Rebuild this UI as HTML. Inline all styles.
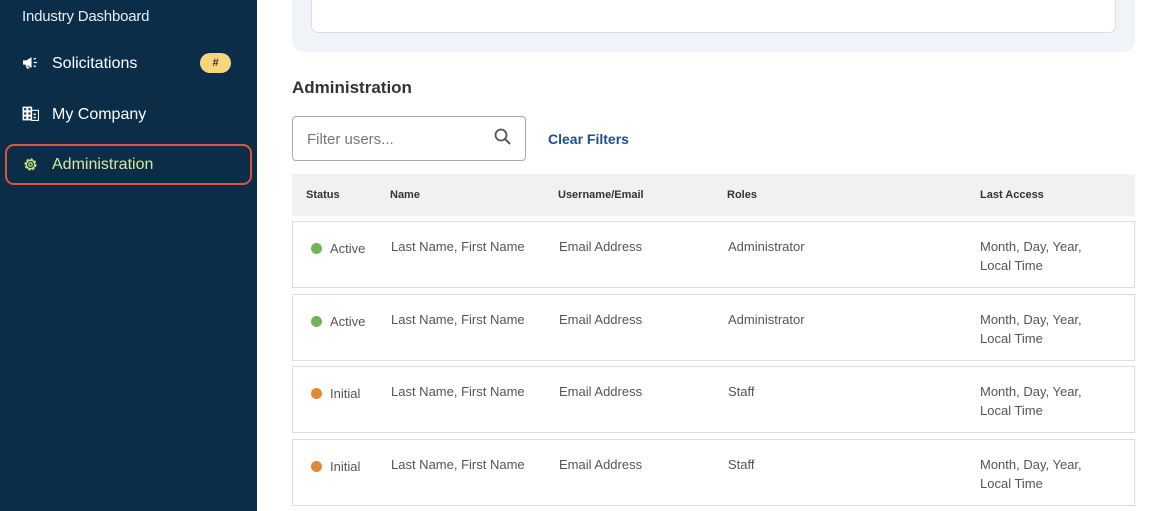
<!DOCTYPE html>
<html><head><style>
*{box-sizing:border-box;margin:0;padding:0}
body{width:1153px;height:511px;overflow:hidden;background:#fff;font-family:"Liberation Sans",sans-serif;position:relative;color:#3a3a3a}
.side{position:absolute;left:0;top:0;width:257px;height:511px;background:#0b2d48;color:#fff}
.side .t{position:absolute;left:22px;top:8px;font-size:15px;color:#e8edf2;letter-spacing:-0.2px}
.nav{position:absolute;left:52px;font-size:16px;color:#fff}
.ic{position:absolute}
.badge{position:absolute;left:200px;top:53px;width:31px;height:20px;border-radius:10px;background:#f7d57a;color:#333;font-size:11px;font-weight:bold;text-align:center;line-height:20px}
.sel{position:absolute;left:5px;top:144px;width:247px;height:41px;border:2.5px solid #e0533f;border-radius:9px}
.card{position:absolute;left:292px;top:-10px;width:843px;height:62px;background:#f0f4f9;border-radius:12px}
.card div{position:absolute;left:19px;top:0;width:805px;height:43px;background:#fff;border:1px solid #d9dee4;border-radius:7px}
h2{position:absolute;left:292px;top:78px;font-size:17px;font-weight:bold;color:#333}
.filter{position:absolute;left:292px;top:116px;width:234px;height:45px;border:1px solid #a9a9a9;border-radius:4px}
.filter span{position:absolute;left:14px;top:14px;font-size:15px;color:#777}
.clear{position:absolute;left:548px;top:131px;font-size:14px;font-weight:bold;color:#1f4e8c}
.th{position:absolute;left:292px;top:174px;width:843px;height:42px;background:#f0f1f1;font-size:11px;font-weight:bold;color:#333}
.th span,.row span{position:absolute}
.row{position:absolute;left:292px;width:843px;height:67px;border:1px solid #ddd;font-size:13px;color:#555}
.dot{width:11px;height:11px;border-radius:50%;left:18px;top:21px}
</style></head><body>
<div class="side">
<div class="t">Industry Dashboard</div>
<svg class="ic" style="left:22px;top:55px" width="17" height="15" viewBox="0 0 16 14"><path d="M1 5h3l5-3v10L4 9H1z" fill="#fff"/><path d="M4 9l1 3h2" stroke="#fff" fill="none" stroke-width="1.4"/><path d="M11 4l2-1M11 7h3M11 10l2 1" stroke="#fff" stroke-width="1.2"/></svg>
<div class="nav" style="top:55px">Solicitations</div>
<div class="badge">#</div>
<svg class="ic" style="left:22px;top:106px" width="17" height="15" viewBox="0 0 16 14"><rect x="0.5" y="0.5" width="9" height="13" fill="#fff"/><rect x="9" y="4" width="6.5" height="9.5" fill="none" stroke="#fff"/><g fill="#0b2d48"><rect x="2" y="2" width="2" height="2"/><rect x="6" y="2" width="2" height="2"/><rect x="2" y="6" width="2" height="2"/><rect x="6" y="6" width="2" height="2"/><rect x="2" y="10" width="2" height="2"/><rect x="6" y="10" width="2" height="2"/></g><rect x="11" y="7" width="2" height="1.5" fill="#fff"/><rect x="11" y="10" width="2" height="1.5" fill="#fff"/></svg>
<div class="nav" style="top:106px">My Company</div>
<div class="sel"></div>
<svg class="ic" style="left:22px;top:156px" width="17" height="17" viewBox="0 0 16 16"><circle cx="8" cy="8" r="4.5" fill="none" stroke="#c5e08a" stroke-width="2.5" stroke-dasharray="2 1.5"/><circle cx="8" cy="8" r="4" fill="none" stroke="#c5e08a" stroke-width="1.4"/><circle cx="8" cy="8" r="1.6" fill="none" stroke="#c5e08a" stroke-width="1.2"/></svg>
<div class="nav" style="top:156px;color:#d4e8a0">Administration</div>
</div>
<div class="card"><div></div></div>
<h2>Administration</h2>
<div class="filter"><span>Filter users...</span>
<svg style="position:absolute;left:201px;top:11px" width="18" height="18" viewBox="0 0 18 18"><circle cx="7" cy="7" r="5.5" fill="none" stroke="#555" stroke-width="1.8"/><path d="M11 11l5 5" stroke="#555" stroke-width="2"/></svg></div>
<div class="clear">Clear Filters</div>
<div class="th"><span style="left:14px;top:15px">Status</span><span style="left:98px;top:15px">Name</span><span style="left:266px;top:15px">Username/Email</span><span style="left:435px;top:15px">Roles</span><span style="left:688px;top:15px">Last Access</span></div>

<div class="row" style="top:221px"><span class="dot" style="background:#6fb35a"></span><span style="left:37px;top:19px">Active</span><span style="left:98px;top:17px">Last Name, First Name</span><span style="left:266px;top:17px">Email Address</span><span style="left:435px;top:17px">Administrator</span><span style="left:687px;top:15px;line-height:19px">Month, Day, Year,<br>Local Time</span></div>
<div class="row" style="top:294px"><span class="dot" style="background:#6fb35a"></span><span style="left:37px;top:19px">Active</span><span style="left:98px;top:17px">Last Name, First Name</span><span style="left:266px;top:17px">Email Address</span><span style="left:435px;top:17px">Administrator</span><span style="left:687px;top:15px;line-height:19px">Month, Day, Year,<br>Local Time</span></div>
<div class="row" style="top:366px"><span class="dot" style="background:#e08a35"></span><span style="left:37px;top:19px">Initial</span><span style="left:98px;top:17px">Last Name, First Name</span><span style="left:266px;top:17px">Email Address</span><span style="left:435px;top:17px">Staff</span><span style="left:687px;top:15px;line-height:19px">Month, Day, Year,<br>Local Time</span></div>
<div class="row" style="top:439px"><span class="dot" style="background:#e08a35"></span><span style="left:37px;top:19px">Initial</span><span style="left:98px;top:17px">Last Name, First Name</span><span style="left:266px;top:17px">Email Address</span><span style="left:435px;top:17px">Staff</span><span style="left:687px;top:15px;line-height:19px">Month, Day, Year,<br>Local Time</span></div>
</body></html>
